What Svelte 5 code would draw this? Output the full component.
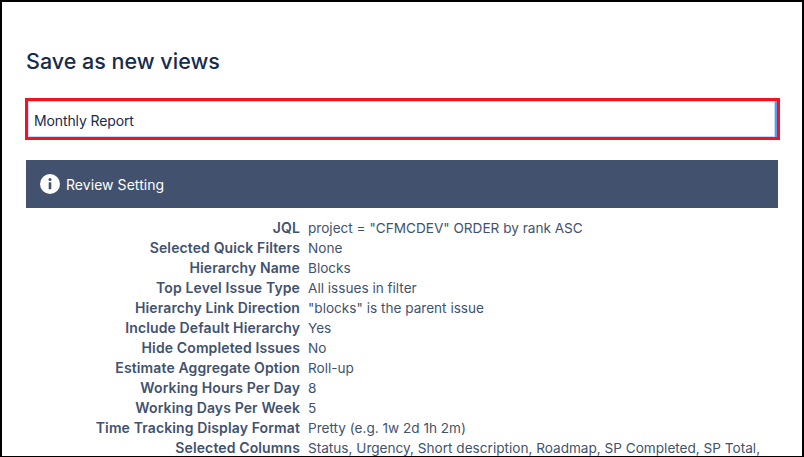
<script>
  const rows = [
    ["JQL", 'project = "CFMCDEV" ORDER by rank ASC'],
    ["Selected Quick Filters", "None"],
    ["Hierarchy Name", "Blocks"],
    ["Top Level Issue Type", "All issues in filter"],
    ["Hierarchy Link Direction", '"blocks" is the parent issue'],
    ["Include Default Hierarchy", "Yes"],
    ["Hide Completed Issues", "No"],
    ["Estimate Aggregate Option", "Roll-up"],
    ["Working Hours Per Day", "8"],
    ["Working Days Per Week", "5"],
    ["Time Tracking Display Format", "Pretty (e.g. 1w 2d 1h 2m)"],
    ["Selected Columns", "Status, Urgency, Short description, Roadmap, SP Completed, SP Total,"]
  ];
</script>

<div class="frame">
  <h1>Save as new views</h1>
  <div class="name-box">
    <div class="name-input">Monthly Report</div>
  </div>
  <div class="banner">
    <svg width="20" height="20" viewBox="0 0 20 20">
      <circle cx="10" cy="10" r="10" fill="#fff" />
      <circle cx="10" cy="5.6" r="1.5" fill="#42526e" />
      <rect x="8.7" y="8.2" width="2.6" height="7" rx="0.4" fill="#42526e" />
    </svg>
    <span>Review Setting</span>
  </div>
  <div class="settings">
    {#each rows as row}
      <div class="label">{row[0]}</div>
      <div class="value">{row[1]}</div>
    {/each}
  </div>
</div>

<style>
  :global(body) {
    margin: 0;
    background: #fff;
  }

  .frame {
    box-sizing: border-box;
    width: 804px;
    height: 457px;
    overflow: hidden;
    border: solid #000;
    border-width: 2px 2px 1px 2px;
    padding: 44px 24px 0 24px;
    font-family: Inter, "Liberation Sans", sans-serif;
    color: #42526e;
  }

  h1 {
    margin: 0;
    font-size: 21.5px;
    line-height: 30px;
    font-weight: 500;
    color: #172b4d;
  }

  .name-box {
    margin-top: 22px;
    margin-left: -1px;
    width: 755px;
    box-sizing: border-box;
    border: 3px solid #f0141e;
  }

  .name-input {
    box-sizing: border-box;
    height: 36px;
    padding: 2px 0 0 6px;
    line-height: 36px;
    font-size: 14px;
    letter-spacing: -0.12px;
    color: #172b4d;
    border-right: 2px solid #5a9bf0;
    box-shadow: inset 0 0 0 1px #c4daf8;
  }

  .banner {
    margin-top: 20px;
    width: 752px;
    height: 48px;
    box-sizing: border-box;
    padding-left: 14px;
    display: flex;
    align-items: center;
    gap: 6px;
    background: #42526e;
    color: #fff;
    font-size: 14px;
    letter-spacing: 0.05px;
  }

  .settings {
    margin-top: 10px;
    display: grid;
    grid-template-columns: 274px 1fr;
    column-gap: 8px;
    grid-auto-rows: 20px;
    font-size: 13.6px;
    line-height: 20px;
  }

  .label {
    text-align: right;
    font-size: 14px;
    font-weight: 600;
    letter-spacing: 0.12px;
    white-space: nowrap;
  }

  .value {
    white-space: nowrap;
  }
</style>
